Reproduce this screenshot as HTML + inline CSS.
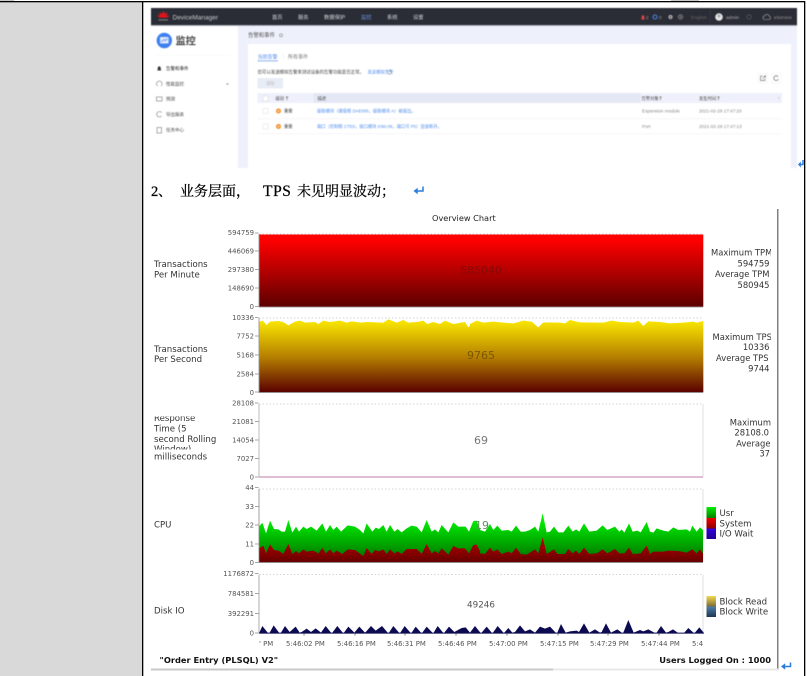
<!DOCTYPE html>
<html lang="zh">
<head>
<meta charset="utf-8">
<title>Overview Chart</title>
<style>
html,body{margin:0;padding:0;background:#fff;width:807px;height:676px;overflow:hidden}
svg{position:absolute;left:0;top:0;display:block}
.shot{filter:blur(.5px)}
.shot text{font-family:"Liberation Sans","Noto Sans CJK SC",sans-serif}
.chart{filter:blur(.3px)}
.chart text{font-family:"DejaVu Sans",sans-serif}
.tick{font-size:6.9px;fill:#555;text-anchor:end}
.lab{font-size:8.6px;fill:#333}
.stat{font-size:8.4px;fill:#333}
.xl{font-size:6.9px;fill:#555}
.nav{font-size:5.3px;fill:#d8d8dc}
.side{font-size:4.5px;fill:#444}
.t4{font-size:4.3px;fill:#555}
.bl{font-size:4.3px;fill:#4f8cec}
.dot{stroke:#c8c8c8;stroke-width:.8;stroke-dasharray:1.5 2;fill:none}
.ax{stroke:#888;stroke-width:.8;fill:none}
.ico{fill:none;stroke:#888;stroke-width:.7}
</style>
</head>
<body>
<svg width="807" height="676" viewBox="0 0 807 676" xmlns="http://www.w3.org/2000/svg">
<defs>
<linearGradient id="gTpm" gradientUnits="userSpaceOnUse" x1="0" y1="240" x2="0" y2="307"><stop offset="0" stop-color="#ff0000"/><stop offset="1" stop-color="#5c0000"/></linearGradient>
<linearGradient id="gTps" gradientUnits="userSpaceOnUse" x1="0" y1="366" x2="0" y2="577"><stop offset="0" stop-color="#f7e300"/><stop offset=".5" stop-color="#b57f00"/><stop offset="1" stop-color="#5a0000"/></linearGradient>
<linearGradient id="gUsr" gradientUnits="userSpaceOnUse" x1="0" y1="120" x2="0" y2="247"><stop offset="0" stop-color="#00f000"/><stop offset="1" stop-color="#006a00"/></linearGradient>
<linearGradient id="gSys" gradientUnits="userSpaceOnUse" x1="0" y1="180" x2="0" y2="247"><stop offset="0" stop-color="#b80000"/><stop offset="1" stop-color="#640000"/></linearGradient>
<linearGradient id="sG" x1="0" y1="0" x2="0" y2="1"><stop offset="0" stop-color="#00f000"/><stop offset="1" stop-color="#008000"/></linearGradient>
<linearGradient id="sR" x1="0" y1="0" x2="0" y2="1"><stop offset="0" stop-color="#f00000"/><stop offset="1" stop-color="#900000"/></linearGradient>
<linearGradient id="sB" x1="0" y1="0" x2="0" y2="1"><stop offset="0" stop-color="#3000e0"/><stop offset="1" stop-color="#200090"/></linearGradient>
<linearGradient id="sY" x1="0" y1="0" x2="0" y2="1"><stop offset="0" stop-color="#f2da55"/><stop offset="1" stop-color="#7d6c35"/></linearGradient>
<linearGradient id="sN" x1="0" y1="0" x2="0" y2="1"><stop offset="0" stop-color="#4f80ab"/><stop offset="1" stop-color="#1f3550"/></linearGradient>
<clipPath id="cStat"><rect x="700" y="200" width="71" height="300"/></clipPath>
<clipPath id="cResp"><rect x="150" y="416.5" width="90" height="33"/></clipPath>
<clipPath id="cX"><rect x="259" y="636" width="444" height="14"/></clipPath>
</defs>

<!-- document frame -->
<rect x="0" y="0" width="14" height="1" fill="#c8c8c8"/>
<rect x="671" y="0" width="28" height="1" fill="#c8c8c8"/>
<rect x="0" y="2" width="142" height="674" fill="#d9d9d9"/>
<rect x="0" y="1" width="805" height="1.3" fill="#000"/>
<rect x="142" y="1" width="1.3" height="675" fill="#000"/>
<rect x="804" y="1" width="1.3" height="675" fill="#000"/>

<!-- DeviceManager screenshot -->
<g class="shot">
<rect x="151" y="25" width="646" height="143" fill="#eef1fb"/>
<rect x="151" y="8" width="646" height="17" fill="#2a2d36"/>
<rect x="151" y="25" width="646" height=".8" fill="#9a9ca4"/>
<rect x="151" y="26" width="87" height="142" fill="#fff"/>
<rect x="248" y="44" width="543" height="124" fill="#fff"/>

<path d="M163.2 11.5l1 0 .6 2.500 1.700-1.500 1 1 -1.500 2 2.500-.3 .5 1.300 -3 1.300 -5.500 0 -3-1.300 .5-1.300 2.500.3 -1.500-2 1-1 1.700 1.500z" fill="#e0141c"/>
<rect x="158.500" y="19.300" width="9.500" height="1.300" fill="#777"/>
<text x="172.500" y="19.300" style="font-size:6.500px" fill="#c8c9cd">DeviceManager</text>

<text class="nav" x="272" y="19">首页</text>
<text class="nav" x="298" y="19">服务</text>
<text class="nav" x="324" y="19">数据保护</text>
<text class="nav" x="361" y="19" style="fill:#6f93e6">监控</text>
<text class="nav" x="387" y="19">系统</text>
<text class="nav" x="413" y="19">设置</text>

<path d="M641 19.500h4l-.7-1v-2a1.300 1.300 0 0 0-2.600 0v2z" fill="#e8424c"/>
<text x="646" y="19" style="font-size:4.500px" fill="#999">2</text>
<circle cx="655" cy="17" r="2" fill="none" stroke="#4a80e6" stroke-width="1.100"/>
<text x="659" y="19" style="font-size:4.500px" fill="#999">0</text>
<circle cx="670.500" cy="17" r="2" fill="#bbb"/><circle cx="670.500" cy="17" r=".8" fill="#2a2d36"/>
<circle cx="680.500" cy="17" r="2.200" fill="none" stroke="#aaa" stroke-width=".6"/><circle cx="680.500" cy="17" r=".8" fill="#aaa"/>
<text x="691" y="19" style="font-size:4.800px" fill="#666">English</text>
<rect x="710" y="9" width=".5" height="15" fill="#3a3d46"/>
<circle cx="719" cy="17" r="3.800" fill="#e6e6e6"/><circle cx="719" cy="16" r="1.500" fill="#aaa"/>
<text x="726" y="19" style="font-size:4.800px" fill="#aaa">admin</text>
<circle cx="749" cy="17" r="2.200" fill="none" stroke="#666" stroke-width=".6"/>
<path d="M764 19.500h5a1.700 1.700 0 0 0 .3-3.300 2.500 2.500 0 0 0-4.700-.3 1.900 1.900 0 0 0-.6 3.600z" fill="none" stroke="#aaa" stroke-width=".6"/>
<text x="774" y="19" style="font-size:4.600px" fill="#999">eService</text>

<circle cx="164.300" cy="40.500" r="7.700" fill="#3f80f0"/>
<rect x="160" y="37" width="8.600" height="6.500" rx=".6" fill="#dfe9fb"/>
<path d="M161 42l3-2.500 1.500 1 2-2" fill="none" stroke="#3f80f0" stroke-width=".7"/>
<text x="175.500" y="44.500" style="font-size:10.200px;font-weight:bold" fill="#444">监控</text>
<path d="M156 55.500h75" stroke="#e9e9e9" stroke-width=".6" stroke-dasharray="1 1"/>

<path d="M157 70.500h4.500l-.8-1v-2a1.500 1.500 0 0 0-2.900 0v2z" fill="#333"/>
<text class="side" x="166" y="70" style="fill:#222">告警和事件</text>
<path d="M157.500 86a2.800 2.800 0 1 1 3.600 0" class="ico"/>
<text class="side" x="166" y="85.500">性能监控</text>
<path d="M226 83.500l1.500 1.500 1.500-1.500z" fill="#888"/>
<rect x="156.500" y="97" width="5.500" height="4" class="ico"/>
<text class="side" x="166" y="100.700">预测</text>
<path d="M161.500 116a2.700 2.700 0 1 1 0-3.500" class="ico"/>
<text class="side" x="166" y="116">导出报表</text>
<rect x="157" y="127.500" width="4.500" height="5.500" class="ico"/>
<text class="side" x="166" y="131.500">任务中心</text>

<text x="248" y="37" style="font-size:5.400px" fill="#555">告警和事件</text>
<circle cx="281" cy="35.300" r="1.500" fill="none" stroke="#888" stroke-width=".6"/>

<text x="257.500" y="58.500" style="font-size:5px" fill="#4f8cec">当前告警</text>
<rect x="257.500" y="60.500" width="20.500" height=".7" fill="#5c92ea"/>
<rect x="283" y="54" width=".4" height="5" fill="#ddd"/>
<text x="288" y="58.500" style="font-size:5px" fill="#777">所有事件</text>
<text class="t4" x="257.500" y="73.500" style="fill:#444;font-size:4.450px">您可以发送模拟告警来测试设备的告警功能是否正常。</text>
<text class="bl" x="367.500" y="73.500">发送模拟告警</text>
<circle cx="389.500" cy="72.300" r="2" fill="none" stroke="#888" stroke-width=".5"/>
<rect x="257.500" y="78" width="25.500" height="10.500" fill="#e8ecf5"/>
<text x="266" y="85" style="font-size:4.300px" fill="#bbb">清除</text>
<rect x="758" y="73.500" width="9.500" height="9.500" fill="#fff" stroke="#eee" stroke-width=".5"/>
<path d="M760.500 76h2M760.500 76v4.500h4.500v-2M762.500 78.500l3-2.500M764 76h1.500v1.500" class="ico" style="stroke:#777"/>
<rect x="771.500" y="73.500" width="9.500" height="9.500" fill="#fff" stroke="#eee" stroke-width=".5"/>
<path d="M778.200 76.800a2.400 2.400 0 1 0 .2 2.300" class="ico" style="stroke:#666"/>

<rect x="257.500" y="93" width="524.500" height="10" fill="#eef1fb"/>
<rect x="313.500" y="93" width="327" height="10" fill="#e4e8f5"/>
<rect x="263" y="96" width="5" height="5" fill="#fff" stroke="#d5d5d5" stroke-width=".5"/>
<text class="t4" x="275.500" y="100" style="fill:#444">级别</text>
<path d="M285.500 96.500h3l-1.100 1.600v2h-.8v-2z" fill="#888"/>
<text class="t4" x="317.500" y="100" style="fill:#444">描述</text>
<text class="t4" x="641.500" y="100" style="fill:#444">告警对象</text>
<path d="M659 96.500h3l-1.100 1.600v2h-.8v-2z" fill="#888"/>
<text class="t4" x="699" y="100" style="fill:#444">发生时间</text>
<path d="M717 96.500h3l-1.100 1.600v2h-.8v-2z" fill="#888"/>
<rect x="778.500" y="96.500" width=".6" height="3" fill="#bbb"/>

<rect x="263" y="108.500" width="5" height="5" fill="#fff" stroke="#ddd" stroke-width=".5"/>
<circle cx="278.500" cy="111" r="2.500" fill="#f5902a"/><circle cx="278.500" cy="111" r=".8" fill="#fff"/>
<text class="t4" x="284" y="112.700" style="fill:#333">重要</text>
<text class="bl" x="317" y="112.700">级联模块（硬盘框 DAE000，级联模块 A）被拔出。</text>
<text class="t4" x="642" y="112.700" style="font-size:4.600px;fill:#888">Expansion module</text>
<text class="t4" x="699" y="112.700" style="font-size:4.600px;fill:#888">2021-02-28 17:47:20</text>
<rect x="257.500" y="118.500" width="524.500" height=".5" fill="#eef0f4"/>

<rect x="263" y="124" width="5" height="5" fill="#fff" stroke="#ddd" stroke-width=".5"/>
<circle cx="278.500" cy="126.500" r="2.500" fill="#f5902a"/><circle cx="278.500" cy="126.500" r=".8" fill="#fff"/>
<text class="t4" x="284" y="128" style="fill:#333">重要</text>
<text class="bl" x="317" y="128">端口（控制框 CTE0，接口模块 IOM.H6，端口号 P0）连接断开。</text>
<text class="t4" x="642" y="128" style="font-size:4.600px;fill:#888">Port</text>
<text class="t4" x="699" y="128" style="font-size:4.600px;fill:#888">2021-02-28 17:47:13</text>
<rect x="257.500" y="133.500" width="524.500" height=".5" fill="#eef0f4"/>
</g>

<!-- return mark 1 -->
<path d="M803 160v4.500h-3" fill="none" stroke="#2b7de0" stroke-width="1.500"/>
<path d="M798 164.500l2.800-3v6z" fill="#2b7de0"/>

<!-- heading line -->
<g fill="#000" stroke="#000" stroke-width=".25" font-size="14">
<text x="151" y="196" font-family="'Liberation Serif',serif" font-size="14.500">2</text>
<text x="158" y="196" font-family="'Noto Serif CJK SC',serif">、</text>
<text x="180" y="196" font-family="'Noto Serif CJK SC',serif">业务层面，</text>
<text x="263" y="196" font-family="'Liberation Serif',serif" font-size="15.500" letter-spacing=".6">TPS</text>
<text x="297" y="196" font-family="'Noto Serif CJK SC',serif">未见明显波动；</text>
</g>
<path d="M423 186.500v4.500h-6" fill="none" stroke="#2b7de0" stroke-width="1.500"/>
<path d="M413.500 191l4.200-3.300v6.600z" fill="#2b7de0"/>

<!-- chart -->
<g class="chart">
<text x="432" y="221" style="font-size:8.200px" fill="#222">Overview Chart</text>
<rect x="777" y="209" width="1.500" height="461" fill="#808080"/>

<!-- TPM -->
<path class="dot" d="M259 234h444"/>
<rect x="259.300" y="234.500" width="444" height="72.300" fill="url(#gTpm)"/>
<text x="481" y="274" text-anchor="middle" style="font-size:11px" fill="#7a0a0a" opacity=".75">585040</text>
<path class="ax" d="M259 234v73h444"/>
<path d="M255 233h3.500M255 251h3.500M255 269.500h3.500M255 288h3.500M255 306.500h3.500" class="ax"/>
<text class="tick" x="254" y="235">594759</text>
<text class="tick" x="254" y="253.500">446069</text>
<text class="tick" x="254" y="272">297380</text>
<text class="tick" x="254" y="290.500">148690</text>
<text class="tick" x="254" y="309">0</text>
<text class="lab" x="154" y="267">Transactions</text>
<text class="lab" x="154" y="277.500">Per Minute</text>
<g clip-path="url(#cStat)">
<text class="stat" x="711" y="255.500">Maximum TPM</text>
<text class="stat" x="769.500" y="266.500" text-anchor="end">594759</text>
<text class="stat" x="715" y="277">Average TPM</text>
<text class="stat" x="769.500" y="288" text-anchor="end">580945</text>
</g>

<!-- TPS -->
<path class="dot" d="M259 318h444"/>
<g transform="translate(140 200) scale(.33333)">
<path fill="url(#gTps)" d="M358 577V365L368 362L380 375L390 365L415 363L430 366L445 376L465 365L480 362L495 368L525 366L535 372L550 362L570 366L600 362L620 368L635 364L665 368L680 366L730 368L745 358L770 368L790 360L805 368L830 366L850 362L862 372L880 366L900 372L915 362L940 372L975 366L985 382L991 375V577Z"/>
</g>
<g transform="translate(470 200) scale(.33333)">
<path fill="url(#gTps)" d="M0 577V372L20 362L40 368L70 365L100 368L130 370L160 362L185 365L205 382L220 367L270 368L285 370L300 360L330 367L400 368L425 362L450 366L490 368L505 362L520 378L535 364L570 366L600 370L640 368L670 365L680 368L700 363V577Z"/>
</g>
<text x="481" y="359" text-anchor="middle" style="font-size:11px" fill="#705000" opacity=".85">9765</text>
<path class="ax" d="M259 318v74.500h444"/>
<path d="M255 317.500h3.500M255 336h3.500M255 355h3.500M255 374h3.500M255 392h3.500" class="ax"/>
<text class="tick" x="254" y="320">10336</text>
<text class="tick" x="254" y="338.500">7752</text>
<text class="tick" x="254" y="357.500">5168</text>
<text class="tick" x="254" y="376.500">2584</text>
<text class="tick" x="254" y="395">0</text>
<text class="lab" x="154" y="352">Transactions</text>
<text class="lab" x="154" y="362">Per Second</text>
<g clip-path="url(#cStat)">
<text class="stat" x="712.500" y="340">Maximum TPS</text>
<text class="stat" x="769.500" y="350" text-anchor="end">10336</text>
<text class="stat" x="716" y="361">Average TPS</text>
<text class="stat" x="769.500" y="371.500" text-anchor="end">9744</text>
</g>

<!-- Response time -->
<path class="dot" d="M259 404h444"/>
<path d="M703 404v73" stroke="#e2e2e2" stroke-width="1" fill="none"/>
<path d="M259 404v73" class="ax" style="stroke:#aaa"/>
<path d="M259 477h444" stroke="#c27ba6" stroke-width="1" fill="none"/>
<text x="481" y="444" text-anchor="middle" style="font-size:11px" fill="#777">69</text>
<path d="M255 403h3.500M255 421.500h3.500M255 440h3.500M255 458.500h3.500M255 477h3.500" class="ax"/>
<text class="tick" x="254" y="405.500">28108</text>
<text class="tick" x="254" y="424">21081</text>
<text class="tick" x="254" y="442.500">14054</text>
<text class="tick" x="254" y="461">7027</text>
<text class="tick" x="254" y="479.500">0</text>
<g clip-path="url(#cResp)">
<text class="lab" x="154" y="421">Response</text>
<text class="lab" x="154" y="431.500">Time (5</text>
<text class="lab" x="154" y="442">second Rolling</text>
<text class="lab" x="154" y="452">Window)</text>
</g>
<text class="lab" x="154" y="459.500">milliseconds</text>
<text class="stat" x="771" y="425.500" text-anchor="end">Maximum</text>
<text class="stat" x="769" y="435.500" text-anchor="end">28108.0</text>
<text class="stat" x="770.500" y="446.500" text-anchor="end">Average</text>
<text class="stat" x="770" y="456.500" text-anchor="end">37</text>

<!-- CPU -->
<path class="dot" d="M259 489h444"/>
<path d="M703 489v73" stroke="#e2e2e2" stroke-width="1" fill="none"/>
<g transform="translate(255 480) scale(.33333)">
<path fill="url(#gUsr)" d="M12 247V140L22 128L33 160L45 122L57 147L70 148L80 155L90 155L100 120L112 158L123 140L132 155L145 140L155 147L168 140L185 152L202 130L213 155L225 135L235 150L245 140L258 155L278 136L300 140L315 150L325 160L335 130L352 155L362 143L372 147L385 135L395 155L405 135L418 155L428 147L440 157L455 145L470 137L485 140L500 157L515 120L530 155L540 148L550 157L560 135L580 157L595 127L610 140L632 140L642 155L655 123L665 122L676 150V247Z"/>
<path fill="url(#gSys)" d="M12 247V205L25 197L33 220L45 193L57 210L70 212L85 222L100 192L112 222L123 213L132 220L145 208L155 215L175 212L190 220L202 204L213 220L225 208L235 220L245 212L262 222L278 208L300 210L325 228L335 204L350 222L360 210L372 214L385 208L395 222L405 208L418 220L428 214L440 222L455 207L485 207L500 222L515 192L530 220L540 213L550 220L560 205L580 224L595 198L610 205L630 205L642 220L655 195L665 194L676 215V247Z"/>
</g>
<g transform="translate(480 480) scale(.33333)">
<path fill="url(#gUsr)" d="M0 247V150L15 155L30 132L40 150L52 137L65 152L85 150L95 155L108 137L122 155L135 155L150 150L165 140L175 155L188 100L200 157L210 155L222 140L235 157L250 157L265 137L278 155L288 148L298 155L312 130L328 155L350 152L368 136L382 150L405 140L418 155L425 148L433 158L447 130L458 155L472 152L482 157L500 126L510 155L520 158L530 145L550 152L565 155L580 142L595 150L620 148L630 155L637 137L650 155L660 142L669 150V247Z"/>
<path fill="url(#gSys)" d="M0 247V220L15 222L30 203L40 215L52 208L65 222L85 215L95 220L108 203L122 222L140 224L165 208L175 220L188 172L200 222L222 208L232 222L255 222L265 207L278 220L288 212L298 222L312 203L328 222L350 220L368 208L382 220L405 207L418 220L433 220L447 203L458 222L482 220L500 197L510 222L520 215L530 215L550 215L565 212L595 213L620 218L637 208L650 220L660 208L669 220V247Z"/>
</g>
<text x="482" y="529" text-anchor="middle" style="font-size:11px" fill="#5f8f5f">19</text>
<path class="ax" d="M259 489v73.500h444"/>
<path d="M255 487.500h3.500M255 506.500h3.500M255 525h3.500M255 544h3.500M255 562.500h3.500" class="ax"/>
<text class="tick" x="254" y="490">44</text>
<text class="tick" x="254" y="509">33</text>
<text class="tick" x="254" y="527.500">22</text>
<text class="tick" x="254" y="546.500">11</text>
<text class="tick" x="254" y="565">0</text>
<text class="lab" x="154" y="527.500">CPU</text>
<rect x="706.500" y="507" width="9.500" height="11" fill="url(#sG)"/>
<rect x="706.500" y="518" width="9.500" height="10.500" fill="url(#sR)"/>
<rect x="706.500" y="528.500" width="9.500" height="10.500" fill="url(#sB)"/>
<text class="lab" x="719.500" y="516">Usr</text>
<text class="lab" x="719.500" y="526.500">System</text>
<text class="lab" x="719.500" y="536.500">I/O Wait</text>

<!-- Disk -->
<path class="dot" d="M259 574.500h444"/>
<path d="M703 575v58" stroke="#e2e2e2" stroke-width="1" fill="none"/>
<path d="M259 575v58" class="ax" style="stroke:#999"/>
<g transform="translate(255 610) scale(.33333)">
<path fill="#0c0a50" d="M12 70L22 48L38 68L44 68L56 46L72 68L78 68L90 48L104 66L122 50L134 68L140 66L155 56L168 66L182 55L198 68L212 48L228 68L232 68L247 48L263 68L267 68L280 50L298 68L313 50L330 68L334 64L348 48L362 62L381 48L398 68L402 68L415 48L432 68L436 68L449 48L466 68L470 68L482 50L498 68L502 68L515 50L532 68L536 68L548 48L564 68L568 68L582 50L598 66L620 54L632 52L645 68L660 48L676 68L680 68L695 50L710 68L714 68L728 48L745 68L748 68L760 54L772 68L780 66L795 46L810 64L825 58L840 68L855 50L870 56L885 50L902 68L907 68L918 42L932 68L945 64L965 62L972 66L987 40L1003 68L1020 58L1035 68L1040 66L1053 40L1068 68L1087 58L1100 68L1105 68L1120 30L1136 68L1155 60L1165 64L1180 58L1198 68L1205 68L1218 48L1233 68L1240 66L1254 58L1268 68L1288 68L1300 54L1315 68L1320 68L1333 52L1346 68V70Z"/>
<path d="M12 70h1335" stroke="#0c0a50" stroke-width="2"/>
</g>
<text x="481" y="607.500" text-anchor="middle" style="font-size:8.800px" fill="#555">49246</text>
<path d="M255 573.500h3.500M255 593.500h3.500M255 613.500h3.500M255 633h3.500" class="ax"/>
<text class="tick" x="254" y="576">1176872</text>
<text class="tick" x="254" y="596">784581</text>
<text class="tick" x="254" y="616">392291</text>
<text class="tick" x="254" y="635.500">0</text>
<text class="lab" x="154" y="613.500">Disk IO</text>
<rect x="706.500" y="596" width="9.500" height="10.500" fill="url(#sY)"/>
<rect x="706.500" y="606.500" width="9.500" height="10.500" fill="url(#sN)"/>
<text class="lab" x="719.500" y="604.500">Block Read</text>
<text class="lab" x="719.500" y="614.500">Block Write</text>

<!-- x axis -->
<path d="M304 633v2.500M355 633v2.500M405 633v2.500M456 633v2.500M507 633v2.500M558 633v2.500M608 633v2.500M659 633v2.500" stroke="#555" stroke-width=".8"/>
<g clip-path="url(#cX)">
<text class="xl" x="259" y="646">' PM</text>
<text class="xl" x="286" y="646">5:46:02 PM</text>
<text class="xl" x="337" y="646">5:46:16 PM</text>
<text class="xl" x="387" y="646">5:46:31 PM</text>
<text class="xl" x="438" y="646">5:46:46 PM</text>
<text class="xl" x="489" y="646">5:47:00 PM</text>
<text class="xl" x="540" y="646">5:47:15 PM</text>
<text class="xl" x="590" y="646">5:47:29 PM</text>
<text class="xl" x="641" y="646">5:47:44 PM</text>
<text class="xl" x="692" y="646">5:47:58 PM</text>
</g>

<text x="159.500" y="663" style="font-size:8.300px;font-weight:bold" fill="#111">"Order Entry (PLSQL) V2"</text>
<text x="771" y="663" text-anchor="end" style="font-size:8.300px;font-weight:bold" fill="#111">Users Logged On : 1000</text>

<rect x="151" y="668.500" width="402" height="2" fill="#c9c9c9"/>
<rect x="553" y="668.500" width="226" height="2" fill="#e8e8e8"/>
</g>

<!-- return mark 3 -->
<path d="M790.500 662.500v4h-6" fill="none" stroke="#2b7de0" stroke-width="1.500"/>
<path d="M781 666.500l4.200-3.300v6.600z" fill="#2b7de0"/>
</svg>
</body>
</html>
